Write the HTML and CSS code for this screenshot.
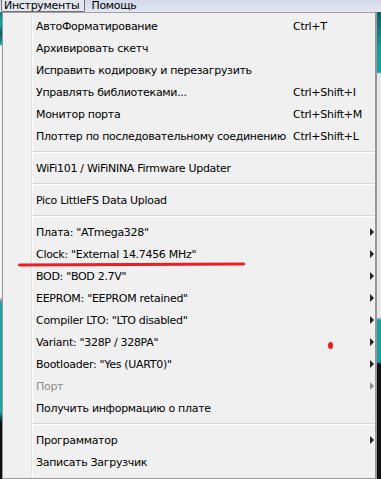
FILE: index.html
```html
<!DOCTYPE html>
<html lang="ru">
<head>
    <meta charset="UTF-8">
    <meta name="viewport" content="width=device-width, initial-scale=1.0">
    <title>Инструменты</title>
    <link rel="stylesheet" href="styles.css">
</head>
<body>
    <div class="menubar">
        <span class="menubar-item active">Инструменты</span>
        <span class="menubar-item">Помощь</span>
    </div>

    <div class="workspace">
        <div class="strip strip-left"></div>

        <div class="menu">
            <div class="item"><span class="label">АвтоФорматирование</span><span class="key">Ctrl+T</span><span class="arrow-box"></span></div>
            <div class="item"><span class="label">Архивировать скетч</span></div>
            <div class="item"><span class="label">Исправить кодировку и перезагрузить</span></div>
            <div class="item"><span class="label">Управлять библиотеками...</span><span class="key">Ctrl+Shift+I</span><span class="arrow-box"></span></div>
            <div class="item"><span class="label">Монитор порта</span><span class="key">Ctrl+Shift+M</span><span class="arrow-box"></span></div>
            <div class="item"><span class="label">Плоттер по последовательному соединению</span><span class="key">Ctrl+Shift+L</span><span class="arrow-box"></span></div>
            <div class="separator"></div>
            <div class="item"><span class="label">WiFi101 / WiFiNINA Firmware Updater</span></div>
            <div class="separator"></div>
            <div class="item"><span class="label">Pico LittleFS Data Upload</span></div>
            <div class="separator"></div>
            <div class="item"><span class="label">Плата: "ATmega328"</span><span class="arrow-box"><i class="arrow"></i></span></div>
            <div class="item"><span class="label">Clock: "External 14.7456 MHz"</span><span class="arrow-box"><i class="arrow"></i></span></div>
            <div class="item"><span class="label">BOD: "BOD 2.7V"</span><span class="arrow-box"><i class="arrow"></i></span></div>
            <div class="item"><span class="label">EEPROM: "EEPROM retained"</span><span class="arrow-box"><i class="arrow"></i></span></div>
            <div class="item"><span class="label">Compiler LTO: "LTO disabled"</span><span class="arrow-box"><i class="arrow"></i></span></div>
            <div class="item"><span class="label">Variant: "328P / 328PA"</span><span class="arrow-box"><i class="arrow"></i></span></div>
            <div class="item"><span class="label">Bootloader: "Yes (UART0)"</span><span class="arrow-box"><i class="arrow"></i></span></div>
            <div class="item disabled"><span class="label">Порт</span><span class="arrow-box"><i class="arrow"></i></span></div>
            <div class="item"><span class="label">Получить информацию о плате</span></div>
            <div class="separator"></div>
            <div class="item"><span class="label">Программатор</span><span class="arrow-box"><i class="arrow"></i></span></div>
            <div class="item"><span class="label">Записать Загрузчик</span></div>

            <div class="mark mark-line"></div>
            <div class="mark mark-dot"></div>
        </div>

        <div class="strip strip-right"></div>
    </div>
</body>
</html>
```

FILE: styles.css
```css
body {
    margin: 0;
    width: 381px;
    height: 479px;
    overflow: hidden;
    background-color: #101010;
    font-family: 'DejaVu Sans', sans-serif;
    font-size: 11px;
    letter-spacing: -0.3px;
    color: #000;
}

/* Top menu bar, only the lower part is visible */
.menubar {
    display: flex;
    height: 12px;
    overflow: hidden;
    background: linear-gradient(#d4d9ea, #e3e7f3);
}

.menubar-item {
    height: 11px;
    line-height: 11px;
    padding: 0 5px 0 2px;
    margin-top: -3px;
    padding-top: 3px;
    white-space: nowrap;
}

.menubar-item.active {
    margin-left: 1px;
    margin-right: 4px;
    border: 1px solid #707070;
    border-top: none;
    border-radius: 0 0 2px 2px;
    background: #e6e8f0;
}

.workspace {
    display: flex;
}

.strip {
    flex: none;
    height: 467px;
}

.strip-left {
    width: 2px;
    background: linear-gradient(#167d7d 0, #1aa3a3 12px, #0e5a5a 22px, #1aa3a3 32px, #f4f4f4 34px,
        #f4f4f4 285px, #9a9a9a 288px, #1aa3a3 292px, #1aa3a3 400px, #101010 410px);
}

.strip-right {
    width: 5px;
    background: linear-gradient(to right, #9a9a9a 0, #9a9a9a 1px, transparent 1px),
        linear-gradient(#0f6060 0, #1a9f9f 40px, #1a9f9f 60px, #e8e8e8 62px, #e8e8e8 305px,
        #1a9f9f 308px, #1a9f9f 350px, #101010 352px);
}

/* Dropdown */
.menu {
    position: relative;
    width: 372px;
    border: 1px solid #979797;
    border-top-color: #a0a0a0;
    padding: 2px 0;
    background-color: #f0f0f0;
    background-image: linear-gradient(to right, transparent 28px, #e2e3e3 28px, #e2e3e3 29px,
        #ffffff 29px, #ffffff 30px, transparent 30px);
}

.item {
    display: flex;
    align-items: center;
    height: 22px;
    padding-left: 33px;
    white-space: nowrap;
}

.label {
    flex: 1;
}

.key {
    width: 77px;
}

.arrow-box {
    width: 5px;
    display: flex;
    align-items: center;
}

.arrow {
    width: 0;
    height: 0;
    border-left: 4px solid #222;
    border-top: 4px solid transparent;
    border-bottom: 4px solid transparent;
}

.item.disabled {
    color: #8d8d8d;
}

.item.disabled .arrow {
    border-left-color: #8d8d8d;
}

.separator {
    height: 10px;
    margin-left: 29px;
    background: linear-gradient(transparent 4px, #d7d7d7 4px, #d7d7d7 5px, #ffffff 5px, #ffffff 6px, transparent 6px);
}

/* Red pen marks drawn over the screenshot */
.mark {
    position: absolute;
    background: #ee1d23;
}

.mark-line {
    left: 15px;
    top: 250px;
    width: 227px;
    height: 3px;
    border-radius: 2px;
    transform: rotate(-0.3deg);
}

.mark-dot {
    left: 325px;
    top: 329px;
    width: 5px;
    height: 7px;
    border-radius: 50%;
}
```
